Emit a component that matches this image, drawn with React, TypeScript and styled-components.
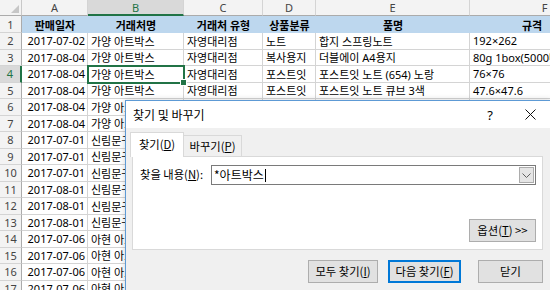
import React from 'react'
import styled, {createGlobalStyle} from 'styled-components'

const GlobalStyle = createGlobalStyle`
    html, body {
        margin:0;
        padding:0;
        width:550px;
        height:290px;
        overflow:hidden;
        background:#fff;
    }
    body {
        font-family:"Noto Sans", "Noto Sans CJK KR", sans-serif;
    }
`

const columns = ['A', 'B', 'C', 'D', 'E', 'F']
const headers = ['판매일자', '거래처명', '거래처 유형', '상품분류', '품명', '규격']
const rows: string[][] = [
    ['2017-07-02', '가양 아트박스', '자영대리점', '노트', '합지 스프링노트', '192×262'],
    ['2017-08-04', '가양 아트박스', '자영대리점', '복사용지', '더블에이 A4용지', '80g 1box(5000매)'],
    ['2017-08-04', '가양 아트박스', '자영대리점', '포스트잇', '포스트잇 노트 (654) 노랑', '76×76'],
    ['2017-08-04', '가양 아트박스', '자영대리점', '포스트잇', '포스트잇 노트 큐브 3색', '47.6×47.6'],
    ['2017-08-04', '가양 아트박스', '자영대리점', '', '', ''],
    ['2017-08-04', '가양 아트박스', '자영대리점', '', '', ''],
    ['2017-07-01', '신림문구', '자영대리점', '', '', ''],
    ['2017-07-01', '신림문구', '자영대리점', '', '', ''],
    ['2017-07-01', '신림문구', '자영대리점', '', '', ''],
    ['2017-08-01', '신림문구', '자영대리점', '', '', ''],
    ['2017-08-01', '신림문구', '자영대리점', '', '', ''],
    ['2017-08-01', '신림문구', '자영대리점', '', '', ''],
    ['2017-07-06', '아현 아트박스', '자영대리점', '', '', ''],
    ['2017-07-06', '아현 아트박스', '자영대리점', '', '', ''],
    ['2017-07-06', '아현 아트박스', '자영대리점', '', '', ''],
    ['2017-07-06', '아현 아트박스', '자영대리점', '', '', ''],
]

const SELECTED_ROW = 4
const SELECTED_COL = 1

const App: React.FC = () => {
    return (
        <Page>
            <GlobalStyle/>
            <Sheet>
                <Corner/>
                {columns.map((c, i) => (
                    <ColHead key={c} $active={i === SELECTED_COL}>{c}</ColHead>
                ))}
                <RowHead $active={false}>1</RowHead>
                {headers.map((h, i) => (
                    <TitleCell key={h} $last={i === headers.length - 1}>{h}</TitleCell>
                ))}
                {rows.map((r, ri) => {
                    const rowNo = ri + 2
                    return (
                        <React.Fragment key={rowNo}>
                            <RowHead $active={rowNo === SELECTED_ROW}>{rowNo}</RowHead>
                            {r.map((v, ci) => (
                                <Cell key={ci}
                                      $align={ci === 0 ? 'right' : 'left'}
                                      $selected={rowNo === SELECTED_ROW && ci === SELECTED_COL}>
                                    {v}
                                </Cell>
                            ))}
                        </React.Fragment>
                    )
                })}
            </Sheet>

            <Dialog>
                <TitleBar>
                    <span>찾기 및 바꾸기</span>
                    <TitleButtons>
                        <TitleButton>?</TitleButton>
                        <TitleButton>
                            <svg width="11" height="11" viewBox="0 0 11 11">
                                <path d="M0.5 0.5 L10.5 10.5 M10.5 0.5 L0.5 10.5" stroke="#111" strokeWidth="1"/>
                            </svg>
                        </TitleButton>
                    </TitleButtons>
                </TitleBar>
                <Body>
                    <TabStrip>
                        <Tab $active={true} $w={54}>찾기(<u>D</u>)</Tab>
                        <Tab $active={false} $w={58}>바꾸기(<u>P</u>)</Tab>
                    </TabStrip>
                    <Panel>
                        <FindRow>
                            <Label>찾을 내용(<u>N</u>):</Label>
                            <Combo>
                                <ComboText>*아트박스<Caret/></ComboText>
                                <ComboButton>
                                    <svg width="9" height="5" viewBox="0 0 9 5">
                                        <path d="M0.5 0.5 L4.5 4.5 L8.5 0.5" stroke="#606060" fill="none" strokeWidth="1"/>
                                    </svg>
                                </ComboButton>
                            </Combo>
                        </FindRow>
                        <OptionsRow>
                            <Button $w={67}>옵션(<u>T</u>) &gt;&gt;</Button>
                        </OptionsRow>
                    </Panel>
                    <Footer>
                        <Button $w={70} $gap={10}>모두 찾기(<u>I</u>)</Button>
                        <Button $w={73} $gap={17} $default>다음 찾기(<u>F</u>)</Button>
                        <Button $w={65}>닫기</Button>
                    </Footer>
                </Body>
            </Dialog>
        </Page>
    )
}

const Page = styled.div`
    position:relative;
    width:550px;
    height:290px;
    overflow:hidden;
`

const Sheet = styled.div`
    display:grid;
    grid-template-columns:22px 66px 96px 79px 53px 154px 150px;
    grid-template-rows:16px 17px repeat(16, 16.5px);
    font-size:11px;
    color:#000;
`

const Corner = styled.div`
    position:relative;
    background:#f3f3f3;
    border-right:1px solid #c8c8c8;
    border-bottom:1px solid #ababab;
    &::after{
        content:'';
        position:absolute;
        right:2px;
        bottom:2px;
        border-style:solid;
        border-width:0 0 8px 8px;
        border-color:transparent transparent #c6c6c6 transparent;
    }
`

const ColHead = styled.div<{$active: boolean}>`
    display:flex;
    align-items:center;
    justify-content:center;
    background:${p => p.$active ? '#d9d9d9' : '#f3f3f3'};
    color:${p => p.$active ? '#217346' : '#444'};
    border-right:1px solid #d4d4d4;
    border-bottom:${p => p.$active ? '2px solid #217346' : '1px solid #ababab'};
    box-sizing:border-box;
`

const RowHead = styled.div<{$active: boolean}>`
    display:flex;
    align-items:center;
    justify-content:center;
    background:${p => p.$active ? '#d9d9d9' : '#f3f3f3'};
    color:${p => p.$active ? '#217346' : '#444'};
    border-bottom:1px solid #d4d4d4;
    border-right:${p => p.$active ? '2px solid #217346' : '1px solid #ababab'};
    box-sizing:border-box;
`

const TitleCell = styled.div<{$last: boolean}>`
    display:flex;
    align-items:center;
    justify-content:center;
    padding-right:${p => p.$last ? '26px' : '0'};
    background:#bdd7ee;
    font-weight:bold;
    white-space:nowrap;
    overflow:hidden;
`

const Cell = styled.div<{$align: 'left' | 'right'; $selected: boolean}>`
    position:relative;
    display:flex;
    align-items:center;
    justify-content:${p => p.$align === 'right' ? 'flex-end' : 'flex-start'};
    padding:0 2px 0 3px;
    white-space:nowrap;
    border-right:1px solid #d4d4d4;
    border-bottom:1px solid #d4d4d4;
    background:#fff;
    box-sizing:border-box;
    z-index:${p => p.$selected ? 2 : 0};
    ${p => p.$selected && `
        outline:2px solid #217346;
        outline-offset:-1px;
        &::after{
            content:'';
            position:absolute;
            right:-4px;
            bottom:-4px;
            width:5px;
            height:5px;
            background:#217346;
            border:1px solid #fff;
        }
    `}
`

const Dialog = styled.div`
    position:absolute;
    left:125px;
    top:100px;
    width:426px;
    height:200px;
    box-sizing:border-box;
    border:1px solid #5d9ad5;
    background:#f0f0f0;
    box-shadow:0 0 6px rgba(0,0,0,0.18);
    display:flex;
    flex-direction:column;
    font-family:"Noto Sans CJK KR", "Noto Sans", sans-serif;
    font-size:12px;
    color:#000;
    z-index:5;
`

const TitleBar = styled.div`
    height:27px;
    flex:none;
    background:#fff;
    display:flex;
    align-items:center;
    justify-content:space-between;
    padding-left:7px;
    span{
        line-height:1;
    }
`

const TitleButtons = styled.div`
    display:flex;
    height:100%;
`

const TitleButton = styled.div`
    width:40px;
    height:100%;
    display:flex;
    align-items:center;
    justify-content:center;
    font-family:"Noto Sans", sans-serif;
    font-size:13px;
`

const Body = styled.div`
    padding:4px 7px 0 4px;
    font-size:11.3px;
`

const TabStrip = styled.div`
    display:flex;
    align-items:flex-end;
    height:24px;
    position:relative;
    z-index:1;
`

const Tab = styled.div<{$active: boolean; $w: number}>`
    width:${p => p.$w}px;
    box-sizing:border-box;
    display:flex;
    align-items:center;
    justify-content:center;
    height:${p => p.$active ? '25px' : '21px'};
    margin-bottom:${p => p.$active ? '-1px' : '0'};
    background:${p => p.$active ? '#fff' : '#f0f0f0'};
    border:1px solid #d9d9d9;
    border-bottom:none;
    border-left:${p => p.$active ? '1px solid #d9d9d9' : 'none'};
    line-height:1;
    white-space:nowrap;
    padding-top:${p => p.$active ? '0' : '1px'};
`

const Panel = styled.div`
    margin-left:2px;
    height:94px;
    box-sizing:border-box;
    background:#fff;
    border:1px solid #d9d9d9;
    padding:8px 6px 7px 7px;
    display:flex;
    flex-direction:column;
    justify-content:space-between;
`

const FindRow = styled.div`
    display:flex;
    align-items:center;
    height:20px;
`

const Label = styled.div`
    width:71px;
    flex:none;
    line-height:1;
    white-space:nowrap;
`

const Combo = styled.div`
    flex:1;
    height:20px;
    box-sizing:border-box;
    border:1px solid #7a7a7a;
    background:#fff;
    display:flex;
`

const ComboText = styled.div`
    flex:1;
    display:flex;
    align-items:center;
    padding-left:2px;
    line-height:1;
    font-size:12px;
`

const Caret = styled.span`
    display:inline-block;
    width:1px;
    height:13px;
    background:#000;
    margin-left:1px;
`

const ComboButton = styled.div`
    width:15px;
    margin:1px;
    box-sizing:border-box;
    border:1px solid #acacac;
    background:#e5e5e5;
    display:flex;
    align-items:center;
    justify-content:center;
`

const OptionsRow = styled.div`
    display:flex;
    justify-content:flex-end;
`

const Button = styled.div<{$w: number; $gap?: number; $default?: boolean}>`
    width:${p => p.$w}px;
    height:23px;
    margin-right:${p => p.$gap || 0}px;
    box-sizing:border-box;
    display:flex;
    align-items:center;
    justify-content:center;
    background:#e1e1e1;
    border:1px solid ${p => p.$default ? '#0078d7' : '#adadad'};
    box-shadow:${p => p.$default ? 'inset 0 0 0 1px #0078d7' : 'none'};
    line-height:1;
    white-space:nowrap;
`

const Footer = styled.div`
    display:flex;
    justify-content:flex-end;
    margin-top:10px;
`

export default App
